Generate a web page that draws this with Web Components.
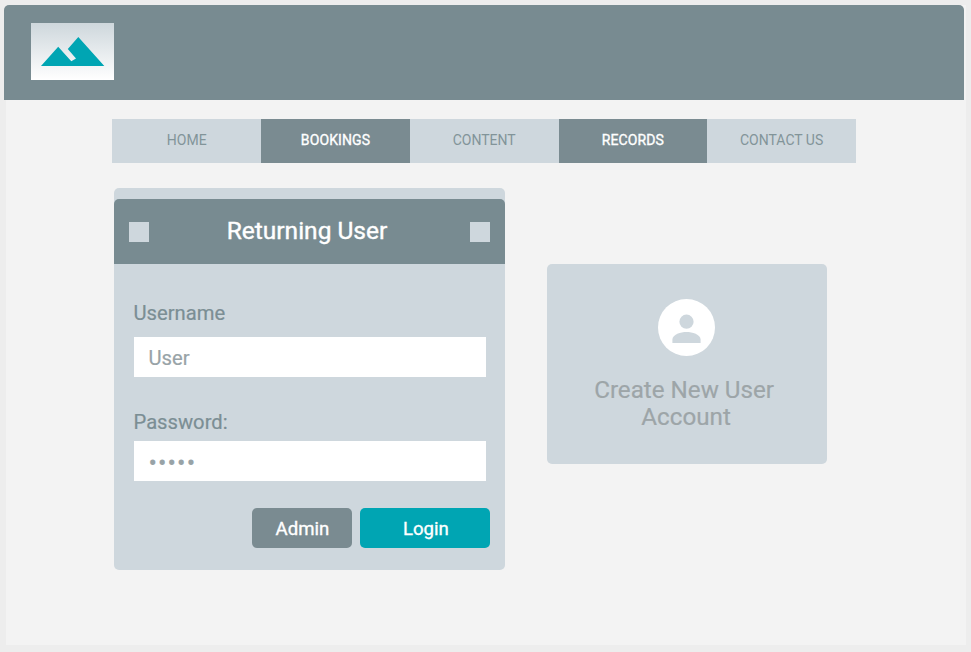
<!DOCTYPE html>
<html lang="en">
<head>
<meta charset="utf-8">
<title>Login</title>
<style>
html,body{margin:0;height:100%}
body{background:#ededed;font-family:Roboto,"Liberation Sans",sans-serif;overflow:hidden}
</style>
</head>
<body>
<app-page>
  <app-header slot="header"></app-header>
  <nav-bar slot="nav">
    <nav-item>HOME</nav-item>
    <nav-item active>BOOKINGS</nav-item>
    <nav-item>CONTENT</nav-item>
    <nav-item active>RECORDS</nav-item>
    <nav-item>CONTACT US</nav-item>
  </nav-bar>
  <login-card>
    <span slot="title">Returning User</span>
    <form-field label="Username">User</form-field>
    <form-field label="Password:" secret>•••••</form-field>
    <action-button slot="actions">Admin</action-button>
    <action-button slot="actions" primary>Login</action-button>
  </login-card>
  <account-card>Create New User <span style="padding-left:4px">Account</span></account-card>
</app-page>
<script>
const define = (name, html) => {
  const template = document.createElement('template');
  template.innerHTML = html;
  customElements.define(name, class extends HTMLElement {
    constructor() {
      super();
      this.attachShadow({mode: 'open'}).append(template.content.cloneNode(true));
    }
    connectedCallback() {
      const label = this.shadowRoot.querySelector('label');
      if (label) label.textContent = this.getAttribute('label');
    }
  });
};

define('app-page', `<style>
  :host{display:block;box-sizing:border-box;width:960px;height:640px;margin:5px 0 0 6px;background:#f3f3f3}
  main{display:flex;align-items:flex-start;gap:41.6px;padding:25px 0 0 108px}
</style><slot name="header"></slot><slot name="nav"></slot><main><slot></slot></main>`);

define('app-header', `<style>
  :host{display:flex;box-sizing:border-box;width:960px;height:95px;margin-left:-2px;padding:18px 27px;background:#788b91;border-radius:5px 5px 0 0}
  .logo{width:83px;height:57px;background:linear-gradient(#ced7dc,#fff)}
  svg{display:block}
</style><div class="logo"><svg width="83" height="57" viewBox="0 0 83 57">
  <path fill="#00a5b3" d="M10 43 L27.2 23.7 L40.3 38.2 L45 35.6 L36.8 26 L47.3 14 L73.3 43Z"/>
</svg></div>`);

define('nav-bar', `<style>
  :host{display:flex;width:743.6px;height:44px;margin:19px 0 0 106.4px}
</style><slot></slot>`);

define('nav-item', `<style>
  :host{flex:1;display:flex;justify-content:center;box-sizing:border-box;padding-top:12px;background:#ced7dd;color:#829499;font-size:14px;line-height:18px}
  :host([active]){background:#7a8b91;color:#fff;-webkit-text-stroke:.35px #fff;letter-spacing:.1px}
</style><slot></slot>`);

define('login-card', `<style>
  :host{display:flex;flex-direction:column;box-sizing:border-box;width:391px;height:382px;padding-top:11px;background:#ced7dd;border-radius:5px}
  header{display:flex;align-items:center;justify-content:space-between;height:65px;padding:0 15px;box-sizing:border-box;background:#788b91;border-radius:5px 5px 0 0;color:#fff;font-size:24.5px;-webkit-text-stroke:.4px #fff}
  slot[name=title]{display:block;padding:0 5px 3px 0}
  i{width:20px;height:20px;background:#ced7dd}
  section{padding:0 19.5px}
  footer{display:flex;justify-content:flex-end;gap:8.5px;margin-top:27px;padding-right:14.6px}
</style><header><i></i><slot name="title"></slot><i></i></header>
<section><slot></slot></section>
<footer><slot name="actions"></slot></footer>`);

define('form-field', `<style>
  :host{display:block;padding-top:37px}
  :host([secret]){padding-top:33px}
  label{display:block;height:36px;color:#7b8e94;font-size:20.2px;line-height:24px;-webkit-text-stroke:.2px #7b8e94}
  :host([secret]) label{height:31px}
  div{box-sizing:border-box;height:40px;padding:9px 15px;background:#fff;color:#98a3a7;font-size:20.2px;line-height:24px;-webkit-text-stroke:.2px #98a3a7}
  :host([secret]) div{padding:11px 15px 0;font-size:25px;letter-spacing:1.1px}
</style><label></label><div><slot></slot></div>`);

define('action-button', `<style>
  :host{display:flex;align-items:center;justify-content:center;box-sizing:border-box;width:100px;height:40px;padding:1px 0 0 1px;background:#7a8b91;border-radius:5px;color:#fff;font-size:18.6px;-webkit-text-stroke:.35px #fff}
  :host([primary]){width:130px;background:#00a5b3}
</style><slot></slot>`);

define('account-card', `<style>
  :host{display:flex;flex-direction:column;align-items:center;box-sizing:border-box;width:280px;height:200px;margin-top:76px;padding-top:35px;background:#ced7dd;border-radius:5px;color:#9da5a8;font-size:24.2px;line-height:27px;text-align:center;-webkit-text-stroke:.2px #9da5a8}
  div{width:190px;margin:21px 5px 0 0}
</style><svg width="57" height="57" viewBox="0 0 57 57">
  <circle cx="28.5" cy="28.5" r="28.5" fill="#fff"/>
  <circle cx="28.5" cy="22.7" r="7.1" fill="#ced7dd"/>
  <path fill="#ced7dd" d="M14.4 44v-3.5c0-5.1 8.4-7.5 14.1-7.5s14.1 2.4 14.1 7.5V44z"/>
</svg><div><slot></slot></div>`);
</script>
</body>
</html>
